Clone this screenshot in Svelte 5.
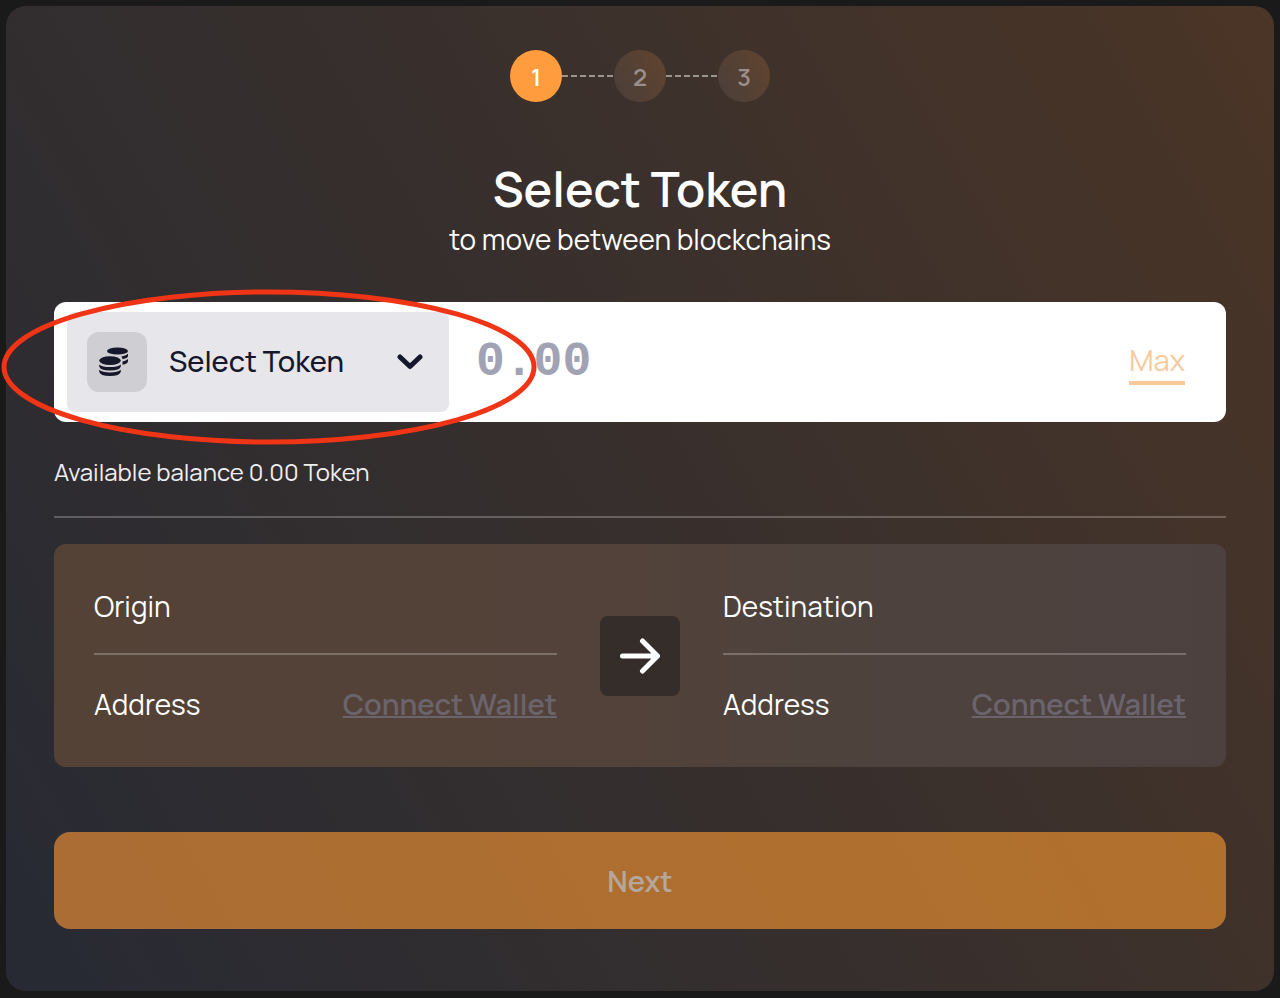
<script lang="ts">
  interface Side {
    id: string;
    label: string;
  }

  const steps = [1, 2, 3];
  const sides: Side[] = [
    { id: "origin", label: "Origin" },
    { id: "destination", label: "Destination" },
  ];

  let currentStep = $state(1);
  let token = $state("");
  let amount = $state("");
  let balance = $state("0.00");
</script>

{#snippet side(item: Side)}
  <section class="side {item.id}">
    <h2>{item.label}</h2>
    <hr />
    <div class="address">
      <span>Address</span>
      <button type="button" class="connect" disabled>Connect Wallet</button>
    </div>
  </section>
{/snippet}

<main class="card">
  <ol class="steps">
    {#each steps as step}
      <li class:active={step === currentStep}>{step}</li>
    {/each}
  </ol>

  <header>
    <h1>Select Token</h1>
    <p>to move between blockchains</p>
  </header>

  <div class="field">
    <div class="token">
      <span class="token-icon">
        <svg viewBox="0 0 30 30" width="30" height="30" aria-hidden="true">
          <ellipse cx="18.5" cy="4" rx="10.5" ry="3.6" />
          <path d="M23.5 9.2 Q27.3 8.3 29 6.7 V9 Q29 11.2 23.5 12.2 Q23.5 10.5 22.3 9.4 Z" />
          <path d="M23.5 14.6 Q27.3 13.8 29 12 V14.5 Q28.6 16.8 23.5 17.8 Z" />
          <ellipse cx="11" cy="13.6" rx="10.8" ry="4.4" />
          <path d="M.2 17.4 Q3.5 20 11 20 T21.8 17.4 V19.4 Q21 23.4 11 23.4 T.2 19.4 Z" />
          <path d="M.2 22.8 Q3.5 25.5 11 25.5 T21.8 22.8 V24.8 Q21 29 11 29 T.2 24.8 Z" />
        </svg>
      </span>
      <select aria-label="Token" bind:value={token}>
        <option value="">Select Token</option>
      </select>
      <svg class="chevron" viewBox="0 0 26 16" width="26" height="16" aria-hidden="true">
        <path d="M3 3 L13 12.5 L23 3" />
      </svg>
    </div>
    <input type="text" inputmode="decimal" aria-label="Amount" placeholder="0.00" bind:value={amount} />
    <button type="button" class="max" disabled>Max</button>

    <svg class="highlight" viewBox="0 0 536 156" width="536" height="156" aria-hidden="true">
      <ellipse cx="268" cy="78" rx="265" ry="75" />
    </svg>
  </div>

  <p class="balance">Available balance {balance} Token</p>
  <hr />

  <div class="route">
    {@render side(sides[0])}
    <div class="arrow">
      <svg viewBox="0 0 40 36" width="40" height="36" aria-hidden="true">
        <path d="M2.5 18 H37 M22.5 3 L37.5 18 L22.5 33" />
      </svg>
    </div>
    {@render side(sides[1])}
  </div>

  <button type="button" class="next" disabled>Next</button>
</main>

<style>
  :global(body) {
    margin: 0;
    background: #1b1a1b;
  }

  .card {
    margin: 6px;
    padding: 44px 48px 62px;
    border-radius: 20px;
    background: linear-gradient(60deg, #272a34 0%, #312d2f 30%, #3a302c 58%, #4b3526 100%);
    color: #fff;
    font-family: Manrope, Inter, sans-serif;
    font-size: 28px;
    font-weight: 400;
  }

  button,
  select,
  input {
    margin: 0;
    padding: 0;
    border: 0;
    background: none;
    font-family: inherit;
    font-size: 29px;
  }

  h1,
  h2,
  p {
    margin: 0;
  }

  hr {
    width: 100%;
    height: 2px;
    margin: 0;
    border: 0;
    background: rgba(255, 255, 255, 0.24);
  }

  .steps {
    display: flex;
    justify-content: center;
    margin: 0;
    padding: 0;
    list-style: none;
  }

  .steps li {
    display: flex;
    align-items: center;
    justify-content: center;
    position: relative;
    width: 52px;
    height: 52px;
    border-radius: 50%;
    background: linear-gradient(60deg, #493e3a, #62442e);
    color: #9a8f8a;
    font-size: 24px;
    font-weight: 600;
  }

  .steps li + li {
    margin-left: 52px;
  }

  /* dashed connector between two steps */
  .steps li + li::before {
    content: "";
    position: absolute;
    right: 100%;
    top: 25px;
    width: 52px;
    height: 2px;
    background: repeating-linear-gradient(90deg, #9b9592 0 6px, transparent 6px 9px);
  }

  .steps li.active {
    background: #ff9c3d;
    color: #fff;
  }

  header {
    margin-top: 60px;
    text-align: center;
  }

  h1 {
    font-size: 48px;
    font-weight: 600;
    line-height: 54px;
  }

  header p {
    line-height: 46px;
  }

  .field {
    display: flex;
    align-items: center;
    position: relative;
    height: 120px;
    margin-top: 40px;
    padding: 0 41px 0 13px;
    box-sizing: border-box;
    border-radius: 12px;
    background: #fff;
  }

  .token {
    display: flex;
    align-items: center;
    position: relative;
    flex: none;
    width: 382px;
    height: 100px;
    padding: 0 20px;
    box-sizing: border-box;
    border-radius: 8px;
    background: #e7e6eb;
    color: #15182b;
  }

  .token-icon {
    display: flex;
    align-items: center;
    justify-content: center;
    flex: none;
    width: 60px;
    height: 60px;
    padding-right: 6px;
    box-sizing: border-box;
    border-radius: 12px;
    background: #cfced3;
    fill: #15182b;
  }

  .token select {
    flex: 1;
    min-width: 0;
    height: 60px;
    padding: 0 0 2px 22px;
    appearance: none;
    color: inherit;
    font-weight: 500;
  }

  .chevron {
    position: absolute;
    right: 26px;
    fill: none;
    stroke: #15182b;
    stroke-width: 5;
    stroke-linecap: round;
    stroke-linejoin: round;
    pointer-events: none;
  }

  .field input {
    flex: 1;
    min-width: 0;
    height: 60px;
    margin-left: 27px;
    color: #15182b;
    font-family: "Liberation Mono", monospace;
    font-size: 48px;
    font-weight: 700;
    outline: none;
  }

  .field input::placeholder {
    color: #a1a3b5;
    opacity: 1;
  }

  .max {
    border-bottom: 4px solid #f9c89b;
    color: #f9c89b;
    font-weight: 400;
    line-height: 42px;
  }

  .highlight {
    position: absolute;
    left: -53px;
    top: -13px;
    fill: none;
    stroke: #f03416;
    stroke-width: 5;
    pointer-events: none;
  }

  .balance {
    margin: 34px 0 28px;
    color: #f0eff0;
    font-size: 24px;
    line-height: 32px;
  }

  .route {
    display: grid;
    grid-template-columns: 1fr 80px 1fr;
    gap: 43px;
    align-items: center;
    margin-top: 26px;
    padding: 41px 40px 40px;
    border-radius: 12px;
    background: linear-gradient(90deg, #544237 0%, #534239 45%, #4e423d 65%, #4d4140 100%);
  }

  .side {
    display: flex;
    flex-direction: column;
    gap: 26px;
  }

  .side h2 {
    font-size: inherit;
    font-weight: inherit;
    line-height: 42px;
  }

  .address {
    display: flex;
    justify-content: space-between;
    line-height: 46px;
    white-space: nowrap;
  }

  .connect {
    color: #6b646d;
    font-weight: 600;
    text-decoration: underline;
    text-decoration-thickness: 2px;
  }

  .arrow {
    display: flex;
    align-items: center;
    justify-content: center;
    height: 80px;
    border-radius: 8px;
    background: #342d2a;
  }

  .arrow path {
    fill: none;
    stroke: #fff;
    stroke-width: 5;
    stroke-linecap: round;
    stroke-linejoin: round;
  }

  .next {
    display: block;
    width: 100%;
    height: 97px;
    margin-top: 65px;
    border-radius: 16px;
    background: linear-gradient(60deg, #ab6d34, #b1702c);
    color: #b5a79d;
    font-weight: 600;
  }
</style>
